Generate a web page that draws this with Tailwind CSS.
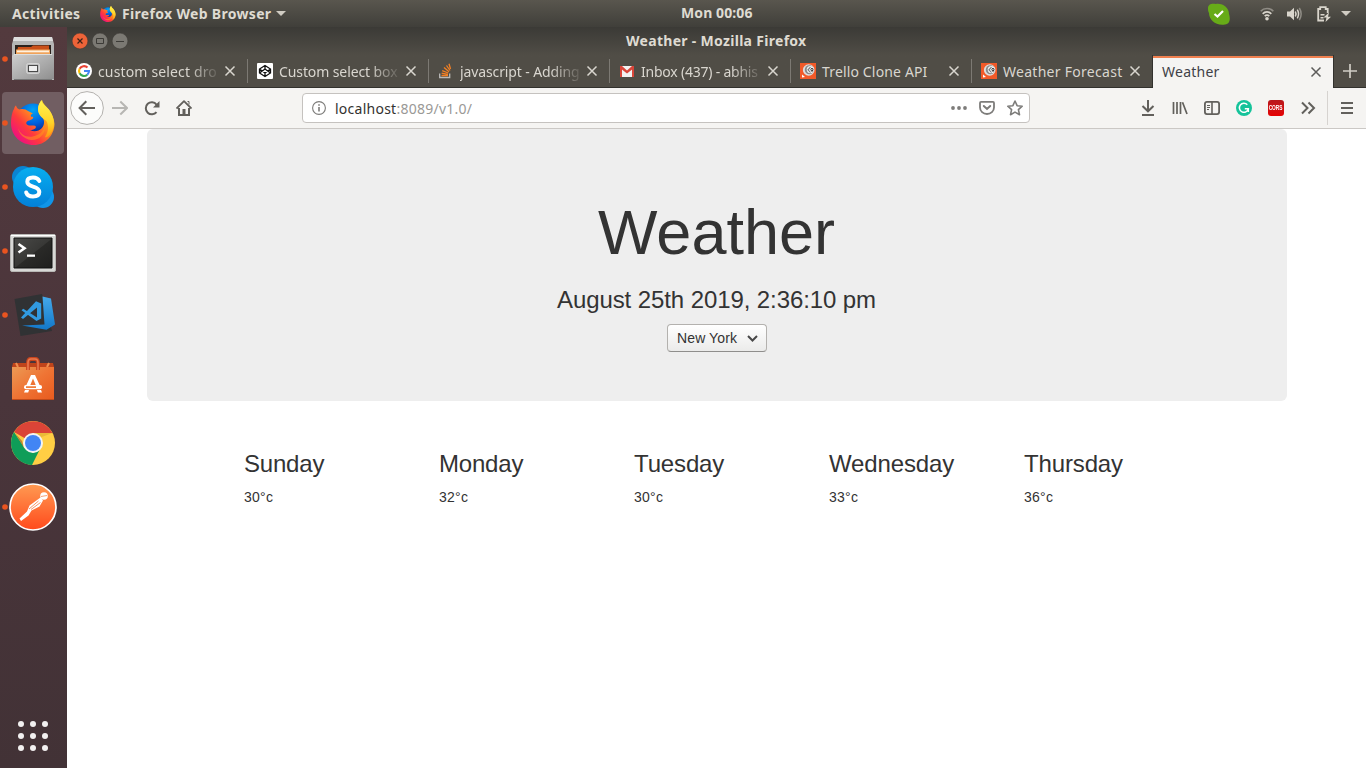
<!DOCTYPE html>
<html lang="en">
<head>
<meta charset="utf-8">
<title>Weather</title>
<script src="https://cdn.jsdelivr.net/npm/@tailwindcss/browser@4"></script>
</head>
<body class="w-[1366px] h-[768px] overflow-hidden flex flex-col bg-white font-['Noto_Sans',sans-serif]">
<svg width="0" height="0" class="absolute">
  <defs>
    <linearGradient id="ffBody" x1=".9" y1=".1" x2=".15" y2=".85"><stop offset="0" stop-color="#ffe226"/><stop offset=".35" stop-color="#ff9a1c"/><stop offset=".7" stop-color="#ff3b3b"/><stop offset="1" stop-color="#f0127c"/></linearGradient>
    <linearGradient id="ffTail" x1="0" y1="0" x2="0" y2="1"><stop offset="0" stop-color="#fff44f"/><stop offset=".6" stop-color="#ffd42a"/><stop offset="1" stop-color="#ff980e"/></linearGradient>
    <radialGradient id="ffBlue" cx=".5" cy=".2" r=".8"><stop offset="0" stop-color="#00a5f5"/><stop offset=".5" stop-color="#0060df"/><stop offset="1" stop-color="#15146e"/></radialGradient>
    <linearGradient id="steel" x1="0" y1="0" x2="1" y2="1"><stop offset="0" stop-color="#cfcfcf"/><stop offset="1" stop-color="#8f8f8f"/></linearGradient>
    <linearGradient id="sky" x1="0" y1="0" x2="0" y2="1"><stop offset="0" stop-color="#08aef0"/><stop offset="1" stop-color="#0380d8"/></linearGradient>
    <linearGradient id="pm" x1="0" y1="0" x2="0" y2="1"><stop offset="0" stop-color="#ff9a52"/><stop offset="1" stop-color="#ff4a1c"/></linearGradient>
    <linearGradient id="bag" x1="0" y1="0" x2="1" y2="1"><stop offset="0" stop-color="#eb9a55"/><stop offset=".5" stop-color="#ef7434"/><stop offset="1" stop-color="#e85a1e"/></linearGradient>
    <linearGradient id="term" x1="0" y1="0" x2="1" y2="1"><stop offset="0" stop-color="#4a4a48"/><stop offset=".5" stop-color="#383836"/><stop offset=".52" stop-color="#2a2a28"/><stop offset="1" stop-color="#1f1f1e"/></linearGradient>
    <linearGradient id="code" x1="0" y1="0" x2="0" y2="1"><stop offset="0" stop-color="#45a9ea"/><stop offset="1" stop-color="#1378c9"/></linearGradient>
    <symbol id="firefox" viewBox="0 0 44 45">
      <circle cx="22" cy="20" r="16.500" fill="url(#ffBlue)"/>
      <path d="M3 9C3.500 7 4.500 5.500 5 5.500C5.500 8 7 9 8.500 9.500C12 8.500 15 9.500 17 11L22 13.500C20 14 19 15.500 20.500 17C23 16 23 19 19.500 20C15.500 21 15 22.500 15.500 24C18 27 21 24.500 24.500 26C26 28 23 30 19 30C26 34 34 28 33 21C32 16 28 15 27 10C27 5 29 2 31 0C32 4 35 6 38 10C41 14 43 18 43.500 24C43 36 34 45 23 45C10 45 0 36 0 23C0 18 1 12 3 9Z" fill="url(#ffBody)"/>
      <path d="M30.500 0C31 5 36 6 39 11C44 19 44 27 40 33C38 37 35 38 34 37C37 32 38 28 36 22C33 18 27 17 27 9C27 5 29 2 30.500 0Z" fill="url(#ffTail)"/>
      <path d="M7 28C10 36 18 39 26 35C29 34 32 31 34 27C34 35 27 41 20 40C13 39 8 34 7 28Z" fill="#ff951d" opacity=".55"/>
    </symbol>
    <symbol id="close" viewBox="0 0 12 12"><path d="M1.500 1.500L10.500 10.500M10.500 1.500L1.500 10.500" fill="none" stroke="currentColor" stroke-width="1.500"/></symbol>
    <symbol id="rocket" viewBox="0 0 16 16"><path fill="#f15a29" d="M0 0h16v16H0z"/><circle cx="8.700" cy="7" r="5.800" fill="#ddd"/><circle cx="9.300" cy="6.800" r="4.500" fill="#888"/><circle cx="10.300" cy="6.600" r="3.600" fill="#eee"/><path d="M10.500 4.200L8 6.800L10.500 9.500" stroke="#777" fill="none" stroke-width="1.100"/><path d="M12 5L10.800 6.700L12 8.500L13 6.700Z" stroke="#333" fill="none" stroke-width="1"/><path d="M2 11.500L5 14L2 14.500Z" fill="#fff"/></symbol>
  </defs>
</svg>

<!-- System bar -->
<header class="h-[27px] shrink-0 flex items-center bg-gradient-to-b from-[#59564e] to-[#403f3a] text-[#dfdbd2] font-bold text-[14px] leading-[27px]">
  <div class="w-[100px] pl-3 tracking-[0.35px]">Activities</div>
  <svg class="w-4 h-4 mr-[6px]"><use href="#firefox"/></svg>
  <div class="w-[149px] whitespace-nowrap tracking-[0.32px]">Firefox Web Browser</div>
  <svg class="ml-[5px] w-[10px] h-[5px]" viewBox="0 0 10 5"><path d="M0 0h10L5 5z" fill="#d0ccc3"/></svg>
  <div class="ml-[395px] w-[72px] pb-[2px] whitespace-nowrap tracking-[0.1px]">Mon 00:06</div>
  <svg class="ml-[455px] w-[22px] h-[22px]" viewBox="0 0 22 22"><path d="M0 5C0 1 4 0 8 1C15 0 21 5 21 11C22 14 23 21 17 21.500C8 23 1 17 1 10C0 8 0 7 0 5Z" fill="#67ab18"/><path d="M6.500 11L9.500 13.500L15 8" fill="none" stroke="#fff" stroke-width="2.200"/></svg>
  <svg class="ml-[30px] w-[14px] h-[14px]" viewBox="0 0 14 14" fill="none" stroke="#d9d5cc" stroke-width="1.700"><path d="M.7 4.200C4 .6 10 .6 13.300 4.200" stroke="#8f8c85"/><path d="M2.700 6.800C5 4.300 9 4.300 11.300 6.800M4.700 9.200C6 7.900 8 7.900 9.300 9.200"/><circle cx="7" cy="11.700" r="1.800" fill="#d9d5cc" stroke="none"/></svg>
  <svg class="ml-[13px] w-[15px] h-[14px]" viewBox="0 0 15 14" fill="none" stroke-width="1.500"><path d="M0 4.500h3L7 .7v12.600L3 9.500H0z" fill="#d9d5cc"/><path d="M8.300 4.500Q9.800 7 8.300 9.500M10.300 2.700Q12.800 7 10.300 11.300" stroke="#d9d5cc"/><path d="M12.300 1Q16 7 12.300 13" stroke="#8f8c85"/></svg>
  <svg class="ml-[15px] w-[14px] h-[16px]" viewBox="0 0 14 16"><path d="M7 14.500H1.200V3h2V1.200h5.500V3h2v4" fill="none" stroke="#d9d5cc" stroke-width="1.800"/><path d="M3.500 8h4v1.500h-4zM3.500 11h3v1.500h-3z" fill="#d9d5cc"/><path d="M12 6.500L6.500 11.500H9.500L8.500 16L14 10.800H11z" fill="#d9d5cc"/></svg>
  <svg class="ml-[10px] w-[10px] h-[5px]" viewBox="0 0 10 5"><path d="M0 0h10L5 5z" fill="#d0ccc3"/></svg>
</header>

<div class="flex flex-1 min-h-0">
  <!-- Dock -->
  <nav class="w-[67px] shrink-0 flex flex-col bg-gradient-to-b from-[#533a3e] via-[#4a353b] to-[#423236]">
    <svg class="w-[67px] h-16" viewBox="0 0 67 64">
      <circle cx="5" cy="32" r="2.800" fill="#e95420"/>
      <path d="M14 10H52L54 17V53H12V17Z" fill="#b5b5b5"/><path d="M14 10H52L53 14H13Z" fill="#dedede"/>
      <path d="M15 18h36v11H15z" fill="#2b211c"/><path d="M18 20h13l2-1.500h16V29H16z" fill="#c9501a"/><path d="M16 22.500h34V29H16z" fill="#f0a35a"/><path d="M17 23.500h32v1.800H17z" fill="#fff1df"/>
      <path d="M14 27H52L54 29V52H12V29Z" fill="url(#steel)"/><path d="M14 27.500H52" stroke="#ddd"/><path d="M14 52.500H52" stroke="#777"/>
      <rect x="26.500" y="36.500" width="13" height="10" rx="2" fill="#bdbdbd" stroke="#d4d4d4"/><rect x="28.500" y="38.500" width="9" height="6" fill="#eee" stroke="#4a4a4a"/>
    </svg>
    <div class="relative h-16">
      <div class="ml-[2px] mt-[1px] w-[62px] h-[62px] rounded-[4px] bg-[#715e62]"></div>
      <svg class="absolute left-0 top-0 w-[67px] h-16" viewBox="0 0 67 64"><circle cx="5" cy="32" r="2.800" fill="#e95420"/><use href="#firefox" x="11" y="9" width="44" height="45"/></svg>
    </div>
    <svg class="w-[67px] h-16" viewBox="0 0 67 64">
      <circle cx="5" cy="32" r="2.800" fill="#e95420"/>
      <circle cx="23" cy="22" r="11" fill="#0a84d2"/><circle cx="43" cy="42" r="11" fill="#1095e8"/><circle cx="33" cy="32" r="20" fill="url(#sky)"/>
      <path d="M39.300 26C38 23.300 36 22.500 33 22.500C29.500 22.500 27.300 24.100 27.300 26.700C27.300 33.200 39.300 30 39.300 37.100C39.300 39.900 36.800 41.500 33 41.500C29.600 41.500 27.200 40.300 26.200 37.500" fill="none" stroke="#fff" stroke-width="4" stroke-linecap="round"/>
    </svg>
    <svg class="w-[67px] h-16" viewBox="0 0 67 64">
      <circle cx="5" cy="32" r="2.800" fill="#e95420"/>
      <rect x="10.500" y="15.500" width="45" height="37" rx="1.500" fill="#d8d8d6" stroke="#b8b8b5"/><path d="M11 16.500h44" stroke="#fff"/><path d="M14 19h38v30H14z" fill="url(#term)" stroke="#111"/>
      <path d="M18.500 25L24.500 29.200L18.500 33.500" fill="none" stroke="#fff" stroke-width="2.600"/><path d="M27 35.500h8v2.300h-8z" fill="#fff"/>
    </svg>
    <svg class="w-[67px] h-16" viewBox="0 0 67 64">
      <circle cx="5" cy="32" r="2.800" fill="#e95420"/>
      <path d="M14.500 16L42 11L52 48L20.500 53Z" fill="#303234"/>
      <path d="M42.500 13.500L51 15.500L55 41.500L46.500 46.800L22 42.500L44.500 41.500Z" fill="url(#code)"/>
      <path d="M36 18.300L41.200 20.500V35.500L36.500 38L21.500 27.200L23.300 25.800L37 34.500V24.500L23 36L21 34.500Z" fill="#319ae0"/>
    </svg>
    <svg class="w-[67px] h-16" viewBox="0 0 67 64">
      <path d="M13 16H53L54 20H12Z" fill="#bf441b"/><path d="M16 16L18 20M49 16L47 20" stroke="#ed9050" stroke-width="2"/>
      <path d="M12 20h42v33H12z" fill="url(#bag)"/><path d="M12 52.500h42" stroke="#bf4a1a"/>
      <path d="M28 23V16Q28 12 31 12H35Q38 12 38 16V23" fill="none" stroke="#c9451d" stroke-width="3.800"/><path d="M28 23V16Q28 12 31 12H35Q38 12 38 16V23" fill="none" stroke="#e97a50" stroke-width="1.600"/>
      <path d="M31 28H35L40.500 40H36.500L33 31.500L29.500 40H25.500Z" fill="#fff"/><rect x="24" y="38" width="18" height="4.200" rx="2" fill="#fff"/><path d="M26 40.100h10" stroke="#f07025" stroke-width="1.600"/><path d="M25 43h4l-.8 2.500H24zM37 43h4l1 2.500h-4.200z" fill="#fff"/>
    </svg>
    <svg class="w-[67px] h-16" viewBox="0 0 67 64">
      <circle cx="33" cy="32" r="22" fill="#ffce44"/>
      <path d="M33 32L14 21A22 22 0 0 1 52.500 22H33Z" fill="#db4437"/>
      <path d="M14 21L24.300 37L33 42L39.500 39L32 54A22 22 0 0 1 14 21Z" fill="#0f9d58"/>
      <path d="M33 22H52.500L39 27Z" fill="#d8a92f" opacity=".55"/><path d="M15 22L24 37L22 30Z" fill="#7d3b24" opacity=".5"/>
      <circle cx="33" cy="32" r="10" fill="#f4f4f4"/><circle cx="33" cy="32" r="8" fill="#4285f4"/>
    </svg>
    <svg class="w-[67px] h-16" viewBox="0 0 67 64">
      <circle cx="5" cy="32" r="2.800" fill="#e95420"/>
      <circle cx="33" cy="32" r="23" fill="url(#pm)" stroke="#fff" stroke-width="1.700"/>
      <circle cx="44" cy="21" r="3.800" fill="#fff"/><path d="M41 21.500L47 20.500" stroke="#f58a55" stroke-width=".8"/>
      <path d="M40.500 22.500L29.500 30.500L27 36.500L19.500 43.500L21 46L28.500 40.500L31.500 35.500L39.500 31.500L43 25.500Z" fill="#fff"/><path d="M38.500 26L29 34M40.500 27.500L31 34.500" stroke="#f47a42" stroke-width=".8"/>
    </svg>
    <svg class="mt-auto w-[67px] h-16" viewBox="0 0 67 64" fill="#f2f0f0">
      <circle cx="21" cy="20" r="3"/><circle cx="33" cy="20" r="3"/><circle cx="45" cy="20" r="3"/><circle cx="21" cy="32" r="3"/><circle cx="33" cy="32" r="3"/><circle cx="45" cy="32" r="3"/><circle cx="21" cy="44" r="3"/><circle cx="33" cy="44" r="3"/><circle cx="45" cy="44" r="3"/>
    </svg>
  </nav>

  <!-- Browser window -->
  <div class="flex-1 min-w-0 flex flex-col">
    <div class="h-[61px] shrink-0 flex flex-col bg-gradient-to-b from-[#3b3a36] via-[#504d46] via-[46%] to-[#504d46]">
      <div class="h-7 flex items-center">
        <svg class="ml-1 w-[60px] h-5" viewBox="0 0 60 20">
          <circle cx="9" cy="10" r="7.900" fill="#ed6338" stroke="#393732" stroke-width=".5"/><path d="M6.500 7.500L11.500 12.500M11.500 7.500L6.500 12.500" stroke="#3a2118" stroke-width="1.200"/>
          <circle cx="29" cy="10" r="7.900" fill="#7b7973" stroke="#393732" stroke-width=".5"/><path d="M25.500 7.500h7v5h-7z" fill="none" stroke="#3c3b37"/>
          <circle cx="49" cy="10" r="7.900" fill="#7b7973" stroke="#393732" stroke-width=".5"/><path d="M45 10.500h8" stroke="#3c3b37"/>
        </svg>
        <div class="ml-[495px] pb-[2px] font-bold text-[14px] text-[#dfdbd2] whitespace-nowrap tracking-[0.3px]">Weather - Mozilla Firefox</div>
      </div>
      <div class="h-[33px] flex text-[#d9d6cf] text-[14px] leading-[32px] tracking-[0.15px]">
        <div class="w-[181px] flex items-center pl-[9px] border-b border-[#32312d] relative">
          <svg class="w-4 h-4 mr-[6px]" viewBox="0 0 16 16"><circle cx="8" cy="8" r="8" fill="#fff"/><g fill="none" stroke-width="2.100"><path d="M11.500 4.500A5 5 0 0 0 3.600 5.800" stroke="#ea4335"/><path d="M3.600 5.800A5 5 0 0 0 3.600 10.300" stroke="#fbbc05"/><path d="M3.600 10.300A5 5 0 0 0 11.300 11.700" stroke="#34a853"/><path d="M11.300 11.700A5 5 0 0 0 13 8H8" stroke="#4285f4"/></g></svg>
          <div class="w-[120px] pt-px whitespace-nowrap [mask-image:linear-gradient(to_right,black_75%,rgba(0,0,0,0.12))]">custom select dro</div>
          <svg class="ml-[6px] w-3 h-3"><use href="#close"/></svg><i class="absolute right-0 top-1 h-6 w-px bg-[#7c7973]"></i>
        </div>
        <div class="w-[181px] flex items-center pl-[9px] border-b border-[#32312d] relative">
          <svg class="w-4 h-4 mr-[6px]" viewBox="0 0 16 16"><rect width="16" height="16" rx="1" fill="#fff"/><path d="M8 2.500L13.500 6V10L8 13.500L2.500 10V6ZM2.500 6L8 10L13.500 6M2.500 10L8 6L13.500 10M8 2.500V6M8 10v3.500" fill="none" stroke="#111" stroke-width="1.300"/></svg>
          <div class="w-[120px] pt-px whitespace-nowrap tracking-[-0.1px] [mask-image:linear-gradient(to_right,black_75%,rgba(0,0,0,0.12))]">Custom select box</div>
          <svg class="ml-[6px] w-3 h-3"><use href="#close"/></svg><i class="absolute right-0 top-1 h-6 w-px bg-[#7c7973]"></i>
        </div>
        <div class="w-[181px] flex items-center pl-[9px] border-b border-[#32312d] relative">
          <svg class="w-4 h-4 mr-[6px]" viewBox="0 0 16 16" fill="none"><path d="M1.700 10.500v4h10v-4" stroke="#bcbbb8" stroke-width="1.300"/><path d="M3.500 12.500h6.500M3.600 10.200L10 11.300M4.200 7.700L10.300 10M6 4.500L11 8.800M8.500 2.500L12 7.500M11 .7L12.500 6" stroke="#f48024" stroke-width="1.300"/></svg>
          <div class="w-[120px] pt-px whitespace-nowrap tracking-[-0.12px] [mask-image:linear-gradient(to_right,black_75%,rgba(0,0,0,0.12))]">javascript - Adding</div>
          <svg class="ml-[6px] w-3 h-3"><use href="#close"/></svg><i class="absolute right-0 top-1 h-6 w-px bg-[#7c7973]"></i>
        </div>
        <div class="w-[181px] flex items-center pl-[9px] border-b border-[#32312d] relative">
          <svg class="w-4 h-4 mr-[6px]" viewBox="0 0 16 16"><path d="M1 3h14v11H1z" fill="#f2f2f2"/><path d="M1 3h2l5 4.500L13 3h2v2L8 10.500L1 5z" fill="#d9463a"/><path d="M1 3h2v11H1zM13 3h2v11h-2z" fill="#d9463a"/></svg>
          <div class="w-[120px] pt-px whitespace-nowrap tracking-[-0.22px] [mask-image:linear-gradient(to_right,black_75%,rgba(0,0,0,0.12))]">Inbox (437) - abhis</div>
          <svg class="ml-[6px] w-3 h-3"><use href="#close"/></svg><i class="absolute right-0 top-1 h-6 w-px bg-[#7c7973]"></i>
        </div>
        <div class="w-[181px] flex items-center pl-[9px] border-b border-[#32312d] relative">
          <svg class="w-4 h-4 mr-[6px]"><use href="#rocket"/></svg>
          <div class="w-[120px] pt-px whitespace-nowrap">Trello Clone API</div>
          <svg class="ml-[6px] w-3 h-3"><use href="#close"/></svg><i class="absolute right-0 top-1 h-6 w-px bg-[#7c7973]"></i>
        </div>
        <div class="w-[181px] flex items-center pl-[9px] border-b border-r border-[#32312d]">
          <svg class="w-4 h-4 mr-[6px]"><use href="#rocket"/></svg>
          <div class="w-[120px] pt-px whitespace-nowrap tracking-[0.28px]">Weather Forecast</div>
          <svg class="ml-[6px] w-3 h-3"><use href="#close"/></svg>
        </div>
        <div class="w-[180px] mt-px pb-[2px] flex items-center pl-[9px] bg-[#f5f4f2] border-t-2 border-[#f0804f] text-[#3f4147] leading-[28px]">
          <div class="w-[148px] tracking-[0.25px]">Weather</div>
          <svg class="w-3 h-3 text-[#5d5c5a]"><use href="#close"/></svg>
        </div>
        <div class="flex-1 flex items-center pl-[9px] border-b border-l border-[#32312d]">
          <svg class="w-[14px] h-[14px]" viewBox="0 0 14 14"><path d="M7 0v14M0 7h14" stroke="#d0cdc5" stroke-width="1.700"/></svg>
        </div>
      </div>
    </div>

    <div class="h-[41px] shrink-0 flex items-center bg-[#f5f4f2] border-b border-[#cbc8c5] text-[#62605c]">
      <svg class="ml-[3px] w-[34px] h-[34px]" viewBox="0 0 34 34" fill="none"><circle cx="17" cy="17" r="16.400" fill="#fcfcfb" stroke="#b3b1ae"/><path d="M25 17H10M16.300 10.300L9.600 17L16.300 23.700" stroke="currentColor" stroke-width="2"/></svg>
      <svg class="ml-2 w-4 h-4 text-[#b7b6b3]" viewBox="0 0 16 16"><path d="M0 8H15M8.300 1.500L15 8L8.300 14.500" stroke="currentColor" stroke-width="2" fill="none"/></svg>
      <svg class="ml-4 w-4 h-4" viewBox="0 0 16 16"><path d="M12.500 12A6 6 0 1 1 12.500 4.500L14 6" fill="none" stroke="currentColor" stroke-width="2"/><path d="M15.500 1V7.500H9z" fill="currentColor"/></svg>
      <svg class="ml-4 w-4 h-4" viewBox="0 0 16 16"><path d="M.5 8.500L8 1.200L15.500 8.500" stroke="currentColor" stroke-width="1.800" fill="none" stroke-linejoin="round"/><path d="M3 8v7h10V8" fill="none" stroke="currentColor" stroke-width="2"/><path d="M6.500 9h3v6h-3z" fill="currentColor"/><path d="M11.500 1.500h1.500v3" stroke="currentColor" fill="none"/></svg>
      <div class="ml-[110px] w-[728px] h-[30px] rounded-[4px] border border-[#c5c2bf] bg-white flex items-center">
        <svg class="ml-[9px] w-[14px] h-[14px] text-[#7c7b79]" viewBox="0 0 14 14"><circle cx="7" cy="7" r="6.400" fill="none" stroke="currentColor" stroke-width="1.100"/><path d="M6.200 6h1.600v4.500H6.200zM6.200 3.200h1.600v1.600H6.200z" fill="currentColor"/></svg>
        <div class="ml-[9px] w-[616px] text-[14px] text-[#9a9996] whitespace-nowrap tracking-[0.25px]"><span class="text-[#33322f]">localhost</span>:8089/v1.0/</div>
        <svg class="w-4 h-4 text-[#7d7c7a]" viewBox="0 0 16 16" fill="currentColor"><circle cx="2" cy="8" r="1.900"/><circle cx="8" cy="8" r="1.900"/><circle cx="14" cy="8" r="1.900"/></svg>
        <svg class="ml-3 w-4 h-4 text-[#7d7c7a]" viewBox="0 0 16 16" fill="none" stroke="currentColor" stroke-width="1.800"><path d="M2 1.900h12q1 0 1 1V7.500A7 6.500 0 0 1 1 7.500V2.900q0-1 1-1Z"/><path d="M4.800 6L8 9L11.200 6" stroke-width="2" stroke-linecap="round"/></svg>
        <svg class="ml-3 w-4 h-4 text-[#7d7c7a]" viewBox="0 0 16 16"><path d="M8 1L10.100 5.700L15.200 6.200L11.400 9.700L12.500 14.700L8 12.100L3.500 14.700L4.600 9.700L.8 6.200L5.900 5.700Z" fill="none" stroke="currentColor" stroke-width="1.600" stroke-linejoin="round"/></svg>
      </div>
      <svg class="ml-[110px] w-4 h-4" viewBox="0 0 16 16"><path d="M8 0v11M2.500 6L8 11.300L13.500 6M2 15h12" fill="none" stroke="currentColor" stroke-width="2"/></svg>
      <svg class="ml-4 w-4 h-4" viewBox="0 0 16 16" fill="none" stroke="currentColor" stroke-width="1.700"><path d="M1.500 2v12M5 2v12M8.500 2v12M10.500 2.300L15 14"/></svg>
      <svg class="ml-4 w-4 h-4" viewBox="0 0 16 16" fill="none" stroke="currentColor"><rect x=".9" y="1.900" width="14.200" height="12.200" rx="2" stroke-width="1.800"/><path d="M8 2v12" stroke-width="1.600"/><path d="M3 5.500h3M3 7.500h3M3 9.500h2"/></svg>
      <svg class="ml-4 w-4 h-4" viewBox="0 0 16 16"><circle cx="8" cy="8" r="8" fill="#15c39a"/><path d="M11.300 4.800A4.500 4.500 0 1 0 12.300 8.800H8.800M12.300 8.500V12" fill="none" stroke="#fff" stroke-width="1.500"/></svg>
      <div class="ml-4 w-4 h-4 rounded-[3px] bg-gradient-to-b from-[#b8171b] to-[#e60000] text-white flex items-center justify-center"><span class="font-bold text-[8px] leading-none scale-x-[.6] font-['Liberation_Sans',sans-serif]">CORS</span></div>
      <svg class="ml-4 w-4 h-4" viewBox="0 0 16 16" fill="none" stroke="currentColor" stroke-width="2"><path d="M2 2.500L7.500 8L2 13.500M8.500 2.500L14 8L8.500 13.500"/></svg>
      <div class="ml-[11px] w-px h-[34px] bg-[#d6d3d0]"></div>
      <svg class="ml-[13px] w-3 h-3" viewBox="0 0 12 12"><path d="M0 1h12M0 6h12M0 11h12" stroke="currentColor" stroke-width="1.900"/></svg>
    </div>

    <!-- Page -->
    <main class="flex-1 bg-white text-[#333] font-['Liberation_Sans',Arial,sans-serif] text-[14px] leading-5">
      <section class="ml-[80px] w-[1140px] h-[272px] rounded-[6px] bg-[#eee] flex flex-col items-center pt-[68px]">
        <h1 class="text-[63px] leading-[70px] pr-px">Weather</h1>
        <h3 class="mt-5 text-[24px] leading-[26px] pr-px tracking-[-0.09px]">August 25th 2019, 2:36:10 pm</h3>
        <div class="mt-[11px] w-[100px] h-[28px] rounded-[4px] border border-[#b3b1ae] border-b-[#8f8e8c] bg-gradient-to-b from-white to-[#ebebea] flex items-center pl-[9px]">
          <span class="w-[70px] tracking-[0.12px]">New York</span>
          <svg class="w-[11px] h-[7px]" viewBox="0 0 11 7"><path d="M1 1L5.500 5.500L10 1" fill="none" stroke="#484848" stroke-width="2"/></svg>
        </div>
      </section>
      <section class="mt-[50px] ml-[177px] grid grid-cols-[repeat(5,195px)]">
        <div><h3 class="text-[24px] leading-[26px] mb-[10px] tracking-[-0.2px]">Sunday</h3><p class="tracking-[0.25px]">30°c</p></div>
        <div><h3 class="text-[24px] leading-[26px] mb-[10px] tracking-[-0.2px]">Monday</h3><p class="tracking-[0.25px]">32°c</p></div>
        <div><h3 class="text-[24px] leading-[26px] mb-[10px] tracking-[-0.14px]">Tuesday</h3><p class="tracking-[0.25px]">30°c</p></div>
        <div><h3 class="text-[24px] leading-[26px] mb-[10px] tracking-[-0.14px]">Wednesday</h3><p class="tracking-[0.25px]">33°c</p></div>
        <div><h3 class="text-[24px] leading-[26px] mb-[10px] tracking-[-0.14px]">Thursday</h3><p class="tracking-[0.25px]">36°c</p></div>
      </section>
    </main>
  </div>
</div>
</body>
</html>
